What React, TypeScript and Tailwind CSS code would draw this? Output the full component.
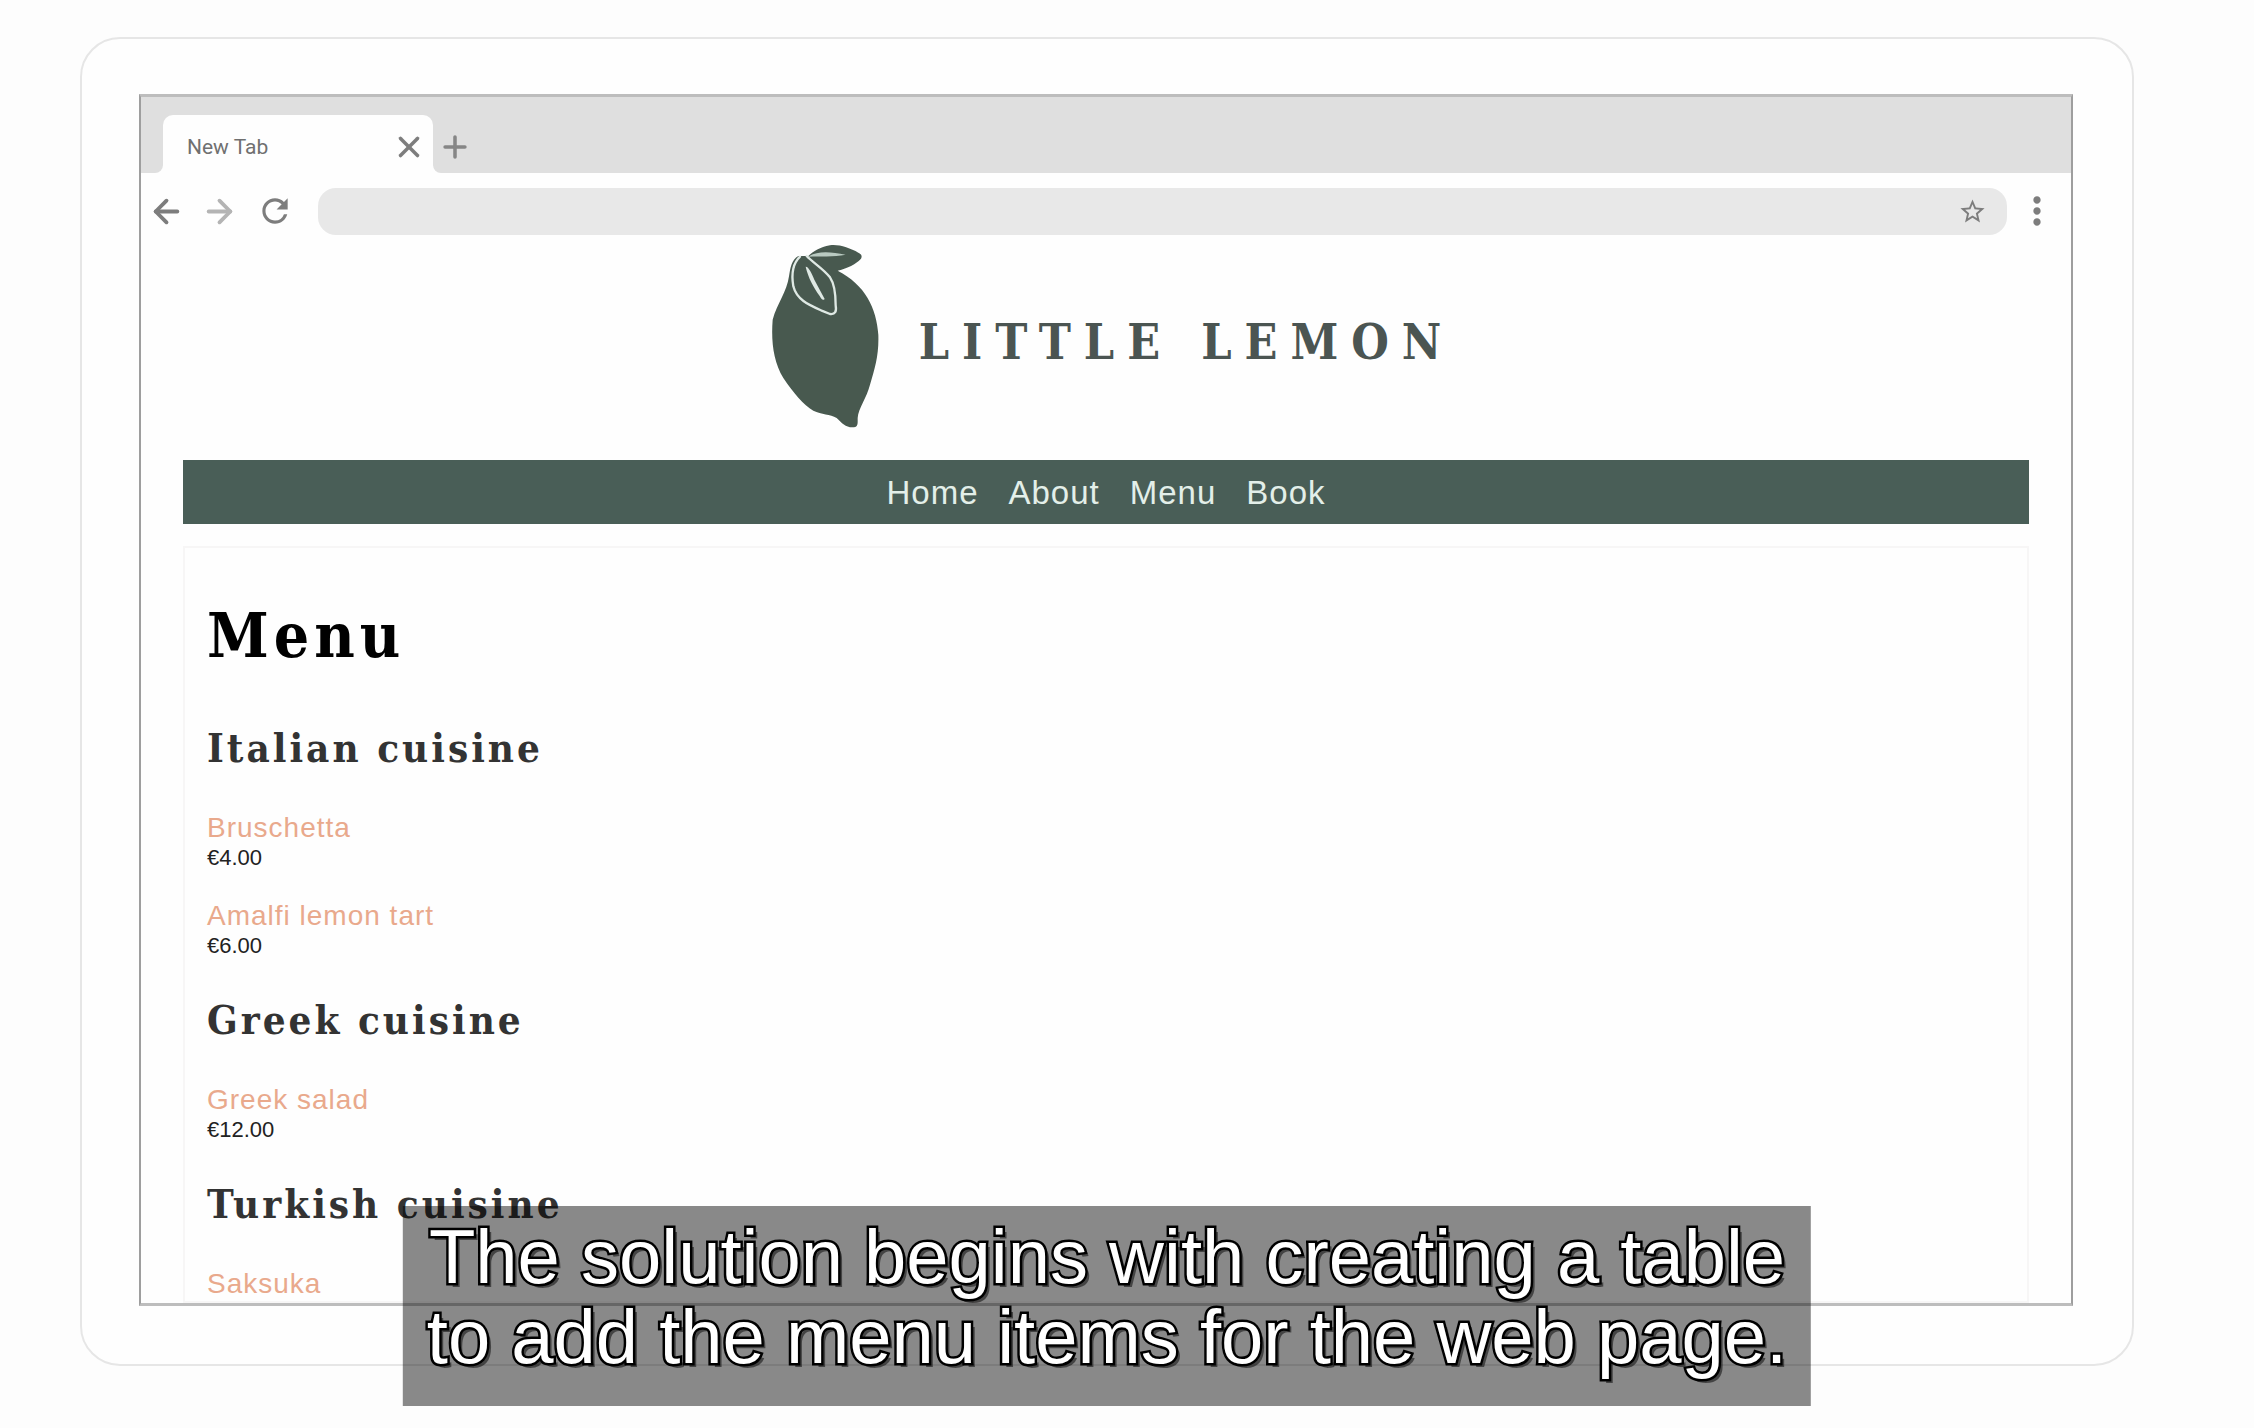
import { ArrowLeft, ArrowRight, Plus, X } from "lucide-react";
import { MdMoreVert, MdRefresh, MdStarBorder } from "react-icons/md";

const links = ["Home", "About", "Menu", "Book"];

const sections = [
  {
    title: "Italian cuisine",
    items: [
      { name: "Bruschetta", price: "€4.00" },
      { name: "Amalfi lemon tart", price: "€6.00" },
    ],
  },
  { title: "Greek cuisine", items: [{ name: "Greek salad", price: "€12.00" }] },
  { title: "Turkish cuisine", items: [{ name: "Saksuka", price: "" }] },
];

function LemonLogo() {
  return (
    <svg viewBox="38 38 324 552" className="h-[184px] w-[108px] shrink-0" aria-hidden="true">
      <path
        fill="#48594f"
        d="M120 74C100 84 96 110 92 135C86 180 56 218 43 265C38 330 45 390 75 440C105 485 135 520 165 538C190 550 215 548 235 560C250 575 262 588 282 588C300 588 298 578 298 560C300 530 325 500 335 460C350 410 362 370 360 310C355 230 320 160 238 118C270 110 290 100 308 82C312 75 310 68 300 64C275 50 240 38 215 42C185 48 165 60 150 74Z"
      />
      <path
        fill="none"
        stroke="#dfe9e4"
        strokeWidth="7"
        strokeLinecap="round"
        strokeLinejoin="round"
        d="M125 76C105 95 98 125 105 165C115 205 150 220 190 238L215 248C231 250 235 240 232 222C232 190 230 160 215 138C195 112 165 95 145 74"
      />
      <path fill="#dfe9e4" d="M142 106C150 105 160 125 168 145L199 203C194 209 189 204 184 194C165 167 150 140 142 106Z" />
      <path fill="#b9cac1" d="M150 76C175 58 215 60 262 70C225 77 185 74 150 76Z" />
    </svg>
  );
}

function TabStrip() {
  return (
    <div className="flex h-[76px] shrink-0 bg-[#fefefe]">
      <div className="w-[22px] rounded-br-lg bg-[#dfdfdf]" />
      <div className="flex w-[270px] bg-[#dfdfdf] pt-[18px]">
        <div className="flex flex-1 items-center justify-between rounded-t-[10px] bg-[#fefefe] pt-[5px] pr-[7px] pl-[24px]">
          <span className="font-[Roboto,sans-serif] text-[21px] leading-6 text-[#707070]">New Tab</span>
          <button type="button" aria-label="Close tab" className="text-[#7d7d7d]">
            <X size={34} strokeWidth={2.5} />
          </button>
        </div>
      </div>
      <div className="flex flex-1 items-center rounded-bl-lg bg-[#dfdfdf] pt-[23px] pl-[5px]">
        <button type="button" aria-label="Open tab" className="text-[#868686]">
          <Plus size={34} strokeWidth={2.5} />
        </button>
      </div>
    </div>
  );
}

function Toolbar() {
  return (
    <div className="flex h-[71px] shrink-0 items-center pt-[5px] pr-3 pl-[7px] text-[#7d7d7d]">
      <div className="flex items-center gap-4">
        <button type="button" aria-label="Back">
          <ArrowLeft size={37} strokeWidth={2.5} />
        </button>
        <button type="button" aria-label="Forward" className="text-[#b4b4b4]">
          <ArrowRight size={37} strokeWidth={2.5} />
        </button>
        <button type="button" aria-label="Reload" className="pl-[2px]">
          <MdRefresh size={38} />
        </button>
      </div>
      <div className="ml-6 flex h-[47px] flex-1 items-center rounded-[18px] bg-[#e8e8e8] pr-[20px]">
        <input aria-label="Address" className="h-full min-w-0 flex-1 bg-transparent px-5 text-[20px] outline-none" />
        <button type="button" aria-label="Bookmark this page">
          <MdStarBorder size={29} />
        </button>
      </div>
      <button type="button" aria-label="More options" className="ml-[8px]">
        <MdMoreVert size={44} />
      </button>
    </div>
  );
}

function MenuPage() {
  return (
    <div className="flex min-h-0 flex-1 flex-col overflow-hidden px-[42px] font-['Liberation_Sans',sans-serif]">
      <header className="flex shrink-0 items-center justify-center gap-[40px] pl-[13px]">
        <LemonLogo />
        <p className="pt-3 font-['DejaVu_Serif_Condensed','DejaVu_Serif',serif] text-[48px] leading-[60px] font-bold tracking-[13px] text-[#4b5552]">
          LITTLE LEMON
        </p>
      </header>
      <nav className="mt-8 flex h-16 shrink-0 items-center justify-center gap-[30px] bg-[#495e57] pt-[2px]">
        {links.map((label) => (
          <a key={label} href="#" className="text-[33px] leading-10 tracking-[1px] text-[#e3efe9]">
            {label}
          </a>
        ))}
      </nav>
      <main className="mt-[22px] flex-1 border-2 border-[#f7f6f6] px-[22px] pt-[52px]">
        <h1 className="font-['DejaVu_Serif_Condensed','DejaVu_Serif',serif] text-[62px] leading-[72px] font-bold tracking-[5px] text-black">
          Menu
        </h1>
        {sections.map((section) => (
          <section key={section.title} className="pt-9 first-of-type:pt-[52px]">
            <h2 className="mb-10 font-['DejaVu_Serif_Condensed','DejaVu_Serif',serif] text-[40px] leading-[48px] font-bold tracking-[3px] text-[#333]">
              {section.title}
            </h2>
            <ul className="flex flex-col gap-7">
              {section.items.map((item) => (
                <li key={item.name}>
                  <p className="text-[28px] leading-[32px] tracking-[1px] text-[#e9a98c]">{item.name}</p>
                  <p className="text-[22px] leading-[28px] text-[#222]">{item.price}</p>
                </li>
              ))}
            </ul>
          </section>
        ))}
      </main>
    </div>
  );
}

export default function App() {
  return (
    <div className="h-screen overflow-hidden bg-[#fdfdfd] pt-[37px] pr-[120px] pb-[62px] pl-[80px]">
      <div className="relative flex h-full flex-col rounded-[40px] border-2 border-[#e6e6e6] bg-[#fefefe] pt-[55px] pr-[59px] pb-[58px] pl-[57px]">
        <div className="flex min-h-0 flex-1 flex-col border-x-2 border-y-3 border-x-[#9e9e9e] border-y-[#bdbdbd] bg-[#fefefe]">
          <TabStrip />
          <Toolbar />
          <MenuPage />
        </div>
        <div className="absolute -bottom-[42px] left-1/2 h-[200px] -translate-x-1/2 bg-black/46 px-[24px] pt-[11px] text-center font-['Liberation_Sans',sans-serif] text-[76px] leading-[80px] whitespace-nowrap text-white [-webkit-text-stroke:5px_black] [paint-order:stroke_fill] [text-shadow:4px_4px_0_rgba(0,0,0,0.5)]">
          <p>The solution begins with creating a table</p>
          <p>to add the menu items for the web page.</p>
        </div>
      </div>
    </div>
  );
}
